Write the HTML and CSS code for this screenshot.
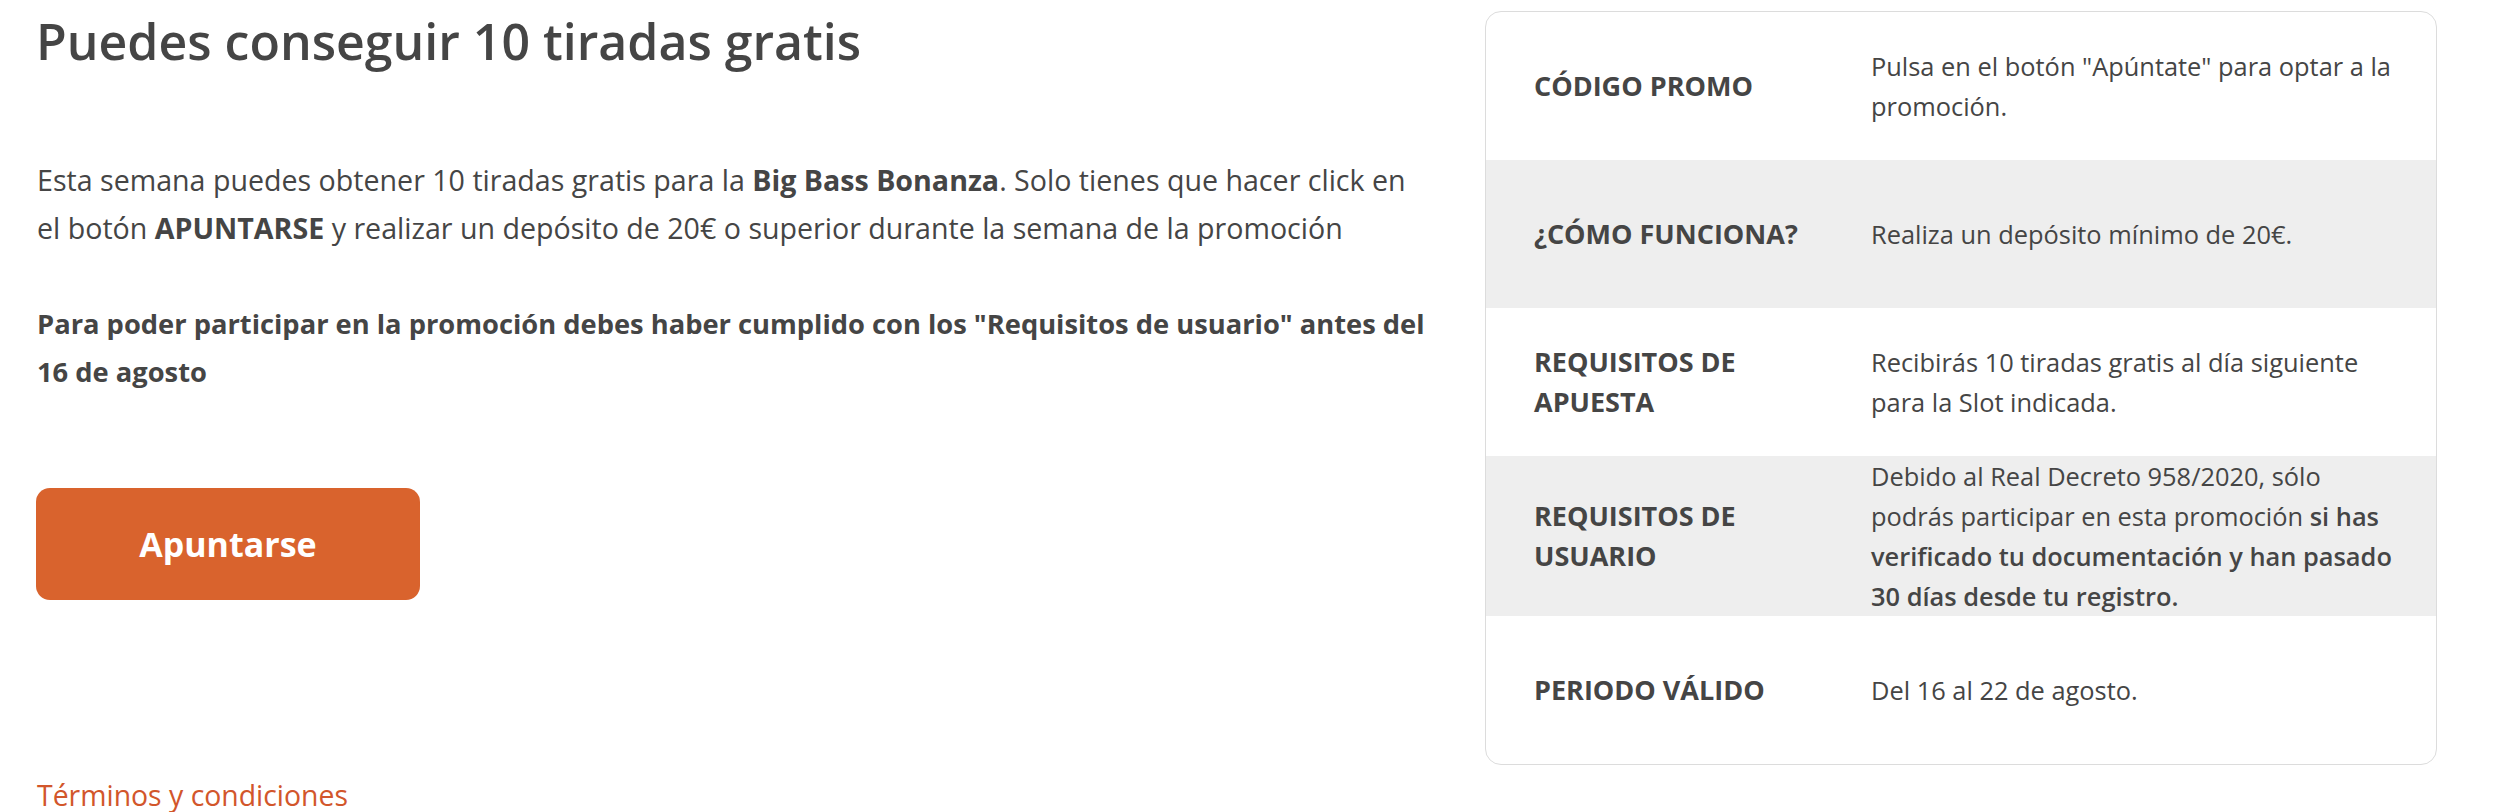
FILE: index.html
```html
<!DOCTYPE html>
<html>
<head>
	<meta charset="utf-8">
	<title>Tiradas gratis</title>
	<link rel="stylesheet" href="styles.css">
</head>
<body>
	<main class="promo">
		<section class="promo-info">
			<h1 class="promo-title">Puedes conseguir 10 tiradas gratis</h1>
			<p class="promo-text">Esta semana puedes obtener 10 tiradas gratis para la <strong>Big Bass Bonanza</strong>. Solo tienes que hacer click en el botón <strong>APUNTARSE</strong> y realizar un depósito de 20€ o superior durante la semana de la promoción</p>
			<p class="promo-text promo-note">Para poder participar en la promoción debes haber cumplido con los "Requisitos de usuario" antes del 16 de agosto</p>
			<button class="join">Apuntarse</button>
			<a class="terms" href="#">Términos y condiciones</a>
		</section>
		<aside class="promo-card">
			<div class="row">
				<div class="label">CÓDIGO PROMO</div>
				<div class="value">Pulsa en el botón "Apúntate" para optar a la promoción.</div>
			</div>
			<div class="row">
				<div class="label">¿CÓMO FUNCIONA?</div>
				<div class="value">Realiza un depósito mínimo de 20€.</div>
			</div>
			<div class="row">
				<div class="label">REQUISITOS DE APUESTA</div>
				<div class="value">Recibirás 10 tiradas gratis al día siguiente para la Slot indicada.</div>
			</div>
			<div class="row">
				<div class="label">REQUISITOS DE USUARIO</div>
				<div class="value">Debido al Real Decreto 958/2020, sólo podrás participar en esta promoción <strong>si has verificado tu documentación y han pasado 30 días desde tu registro.</strong></div>
			</div>
			<div class="row">
				<div class="label">PERIODO VÁLIDO</div>
				<div class="value">Del 16 al 22 de agosto.</div>
			</div>
		</aside>
	</main>
</body>
</html>
```

FILE: styles.css
```css
/* fonts */
body {
	font-family: "Open Sans", "DejaVu Sans", sans-serif;
	color: #454545;
}

.promo-title {
	font-size: 50px;
	font-weight: 600;
	line-height: 60px;
}

.promo-text {
	font-size: 28.6px;
	line-height: 48px;
}

.promo-note {
	font-weight: 700;
	font-size: 27.3px;
}

.join {
	font-family: inherit;
	font-size: 34px;
	font-weight: 700;
}

.terms {
	font-size: 28.4px;
}

.label {
	font-size: 27px;
	font-weight: 700;
	line-height: 40px;
}

.value {
	font-size: 25.4px;
	line-height: 40px;
}

.value strong {
	font-weight: 600;
}

/* layout */
body {
	margin: 0;
}

.promo {
	display: flex;
	align-items: flex-start;
	gap: 56px;
	padding: 11px 0 0 36px;
}

.promo-info {
	width: 1393px;
	flex: none;
}

.promo-title {
	margin: 0 0 85px;
}

.promo-text {
	margin: 0 0 48px 1px;
}

.promo-note {
	margin-bottom: 92px;
}

.join {
	display: block;
	width: 384px;
	height: 112px;
	margin-bottom: 176px;
}

.terms {
	display: inline-block;
	margin-left: 1px;
}

.promo-card {
	width: 950px;
	flex: none;
	overflow: hidden;
}

.row {
	display: grid;
	grid-template-columns: 337px 1fr;
	align-items: center;
	min-height: 148px;
	padding: 0 30px 0 48px;
}

.label {
	padding-right: 30px;
}

/* colors */
.promo-card {
	border: 1px solid #dcdcdc;
	border-radius: 16px;
	background-color: #fff;
}

.row:nth-child(even) {
	background-color: #eeeeee;
}

.join {
	color: #fff;
	background-color: #d9632d;
	border: 0;
	border-radius: 14px;
}

.terms {
	color: #d2562b;
	text-decoration: none;
}
```
